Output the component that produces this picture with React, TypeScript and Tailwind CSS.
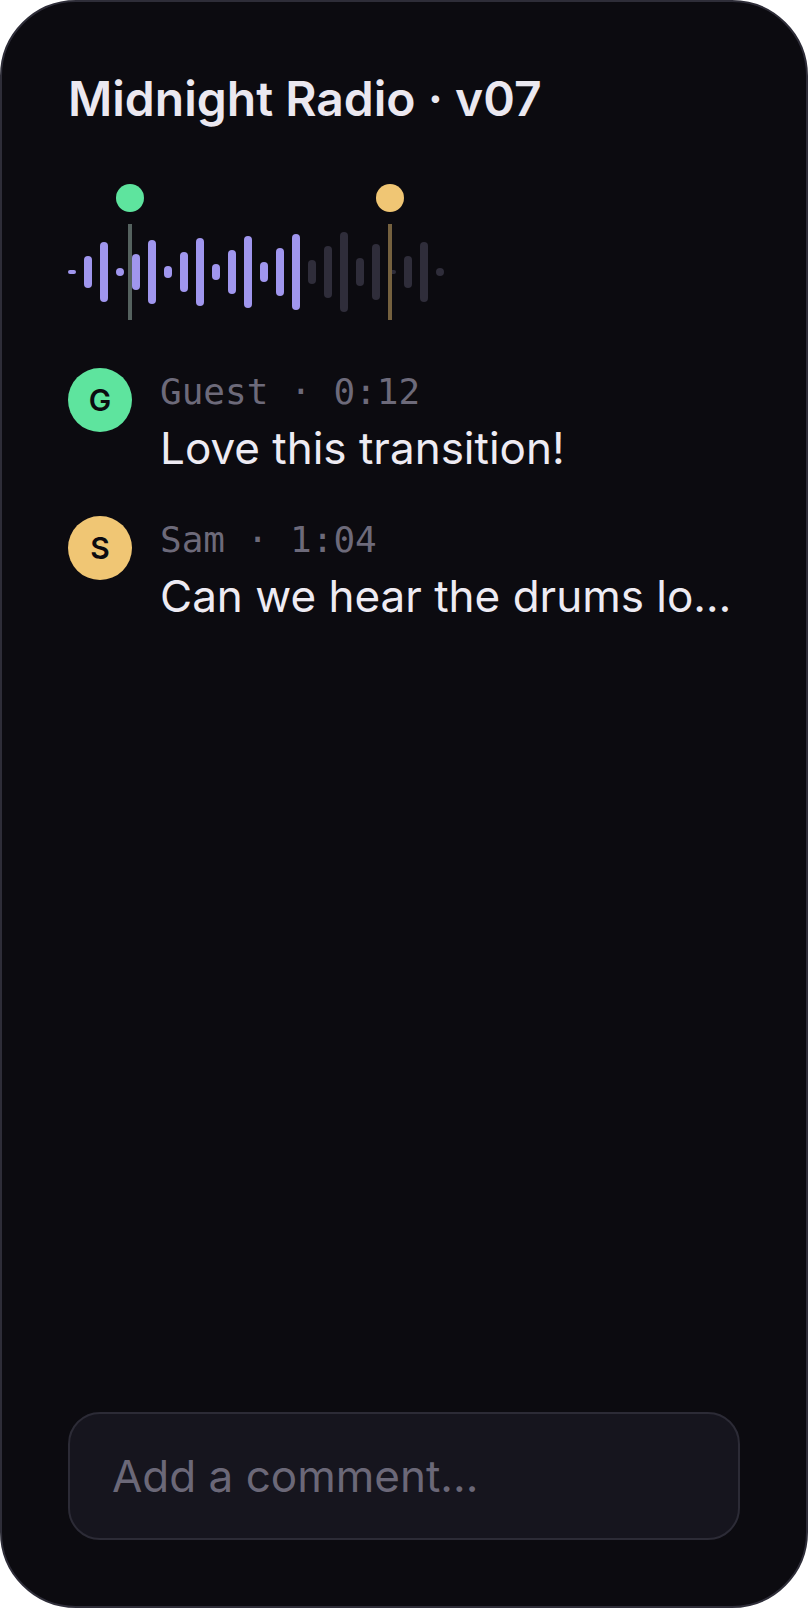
import React from "react";

const bars = [4, 32, 60, 8, 36, 64, 12, 40, 68, 16, 44, 72, 20, 48, 76, 24, 52, 80, 28, 56, 4, 32, 60, 8];
const played = 15;

const comments = [
  { initial: "G", name: "Guest", time: "0:12", text: "Love this transition!", avatar: "bg-[#5ee49e]" },
  { initial: "S", name: "Sam", time: "1:04", text: "Can we hear the drums lo…", avatar: "bg-[#f0c674]" },
];

export default function App() {
  return (
    <div className="h-screen w-full bg-white font-['Inter','Noto_Sans',sans-serif]">
      <div className="flex h-full flex-col rounded-[76px] border-2 border-[#2e2d38] bg-[#0c0b10] px-[66px] pt-[66px] pb-[66px]">
        <h1 className="text-[48px] font-semibold leading-[62px] text-[#ebe8f0]">Midnight Radio · v07</h1>

        <div className="relative mt-[54px] h-[136px]">
          <div className="mt-[40px] flex h-[96px] items-center gap-[8px]">
            {bars.map((h, i) => (
              <div
                key={i}
                className={i < played ? "w-[8px] rounded-full bg-[#a096ee]" : "w-[8px] rounded-full bg-[#2f2d3a]"}
                style={{ height: h }}
              />
            ))}
          </div>
          <div className="absolute left-[48px] top-0 h-[28px] w-[28px] rounded-full bg-[#5ee49e]" />
          <div className="absolute left-[60px] top-[40px] h-[96px] w-[4px] bg-[#55625f]" />
          <div className="absolute left-[308px] top-0 h-[28px] w-[28px] rounded-full bg-[#f0c674]" />
          <div className="absolute left-[320px] top-[40px] h-[96px] w-[4px] bg-[#75613f]" />
        </div>

        <div className="mt-[48px] flex flex-col gap-[38px]">
          {comments.map((c) => (
            <div key={c.name} className="flex items-start gap-[28px]">
              <div
                className={
                  c.avatar +
                  " flex h-[64px] w-[64px] shrink-0 items-center justify-center rounded-full text-[30px] font-semibold leading-none text-[#0c0b10]"
                }
              >
                {c.initial}
              </div>
              <div className="min-w-0 flex-1">
                <div className="font-['DejaVu_Sans_Mono',monospace] text-[36px] leading-[47px] text-[#6d6a7a]">
                  {c.name} · {c.time}
                </div>
                <div className="mt-[3px] whitespace-nowrap text-[44px] leading-[60px] text-[#eeebf3]">{c.text}</div>
              </div>
            </div>
          ))}
        </div>

        <div className="mt-auto flex h-[128px] items-center rounded-[32px] border-2 border-[#2c2b36] bg-[#16151e] px-[42px]">
          <input
            className="w-full bg-transparent text-[44px] text-[#eeebf3] outline-none placeholder:text-[#6b6878]"
            placeholder="Add a comment..."
          />
        </div>
      </div>
    </div>
  );
}
